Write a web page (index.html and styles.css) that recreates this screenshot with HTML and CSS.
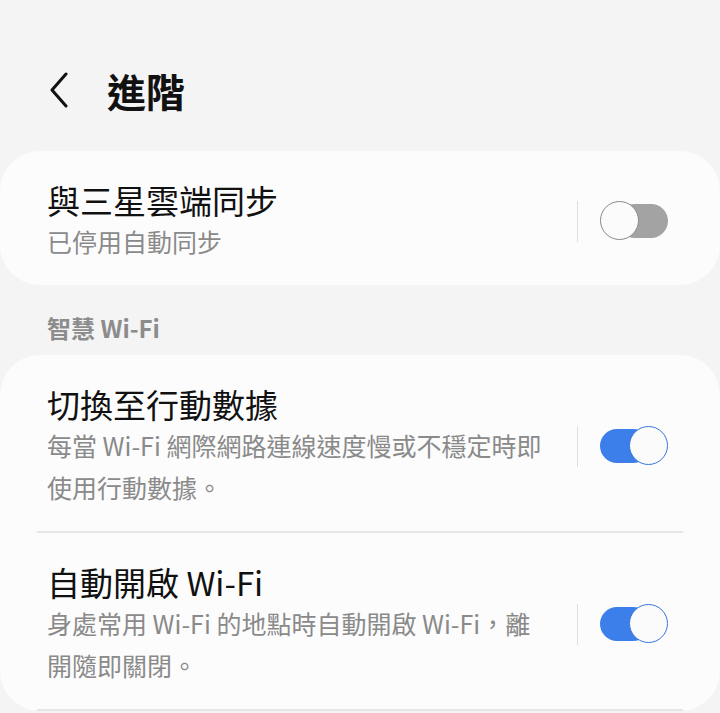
FILE: index.html
```html
<!DOCTYPE html>
<html>
    <head>
        <title>進階</title>
        <link rel="stylesheet" href="styles.css">
    </head>
    <body>
        <div class="header">
            <svg class="back" width="20" height="36" viewBox="0 0 20 36">
                <path d="M17 2 L3 18 L17 34" fill="none" stroke="#111" stroke-width="3" stroke-linecap="round" stroke-linejoin="round" />
            </svg>
            <h1 class="title">進階</h1>
        </div>

        <div class="card">
            <div class="item">
                <div class="text">
                    <div class="item-title">與三星雲端同步</div>
                    <div class="item-sub">已停用自動同步</div>
                </div>
                <div class="switch-wrap">
                    <div class="sep"></div>
                    <div class="toggle"><span class="track"></span><span class="knob"></span></div>
                </div>
            </div>
        </div>

        <div class="section">智慧 Wi-Fi</div>

        <div class="card">
            <div class="item">
                <div class="text">
                    <div class="item-title">切換至行動數據</div>
                    <div class="item-sub">每當 Wi-Fi 網際網路連線速度慢或不穩定時即使用行動數據。</div>
                </div>
                <div class="switch-wrap">
                    <div class="sep"></div>
                    <div class="toggle on"><span class="track"></span><span class="knob"></span></div>
                </div>
            </div>
            <div class="divider"></div>
            <div class="item">
                <div class="text">
                    <div class="item-title">自動開啟 Wi-Fi</div>
                    <div class="item-sub">身處常用 Wi-Fi 的地點時自動開啟 Wi-Fi，離開隨即關閉。</div>
                </div>
                <div class="switch-wrap">
                    <div class="sep"></div>
                    <div class="toggle on"><span class="track"></span><span class="knob"></span></div>
                </div>
            </div>
            <div class="divider"></div>
        </div>
    </body>
</html>
```

FILE: styles.css
```css
body {
    margin: 0;
    background: #f4f4f4;
    color: #111;
    font-family: 'Noto Sans CJK TC', 'Noto Sans', sans-serif;
    height: 713px;
    overflow: hidden;
}

.header {
    display: flex;
    align-items: center;
    height: 48px;
    padding: 66px 0 0 49px;
    margin-bottom: 37px;
}

.back {
    display: block;
}

.title {
    margin: 0 0 0 38px;
    font-size: 39px;
    font-weight: 700;
    line-height: 48px;
}

.card {
    background: #fcfcfc;
    border-radius: 40px;
}

.item {
    display: flex;
    align-items: center;
    padding: 29px 52px 23px 47px;
}

.text {
    flex: 1;
    margin-right: 30px;
}

.item-title {
    font-size: 33px;
    line-height: 40px;
}

.item-sub {
    font-size: 25px;
    line-height: 42px;
    color: #8a8a8a;
}

.switch-wrap {
    display: flex;
    align-items: center;
}

.sep {
    width: 1px;
    height: 41px;
    background: #dedede;
    margin-right: 22px;
}

.toggle {
    position: relative;
    width: 68px;
    height: 40px;
}

.track {
    position: absolute;
    top: 3px;
    right: 0;
    width: 50px;
    height: 34px;
    border-radius: 17px;
    background: #a3a3a3;
}

.knob {
    position: absolute;
    top: 0;
    left: 0;
    width: 37px;
    height: 37px;
    border: 1.5px solid #8a8a8a;
    border-radius: 50%;
    background: #fbfbfb;
}

.toggle.on .track {
    left: 0;
    right: auto;
    background: #3c7eea;
}

.toggle.on .knob {
    left: auto;
    right: 0;
    border-color: #3a78d9;
}

.divider {
    height: 2px;
    background: #e6e6e6;
    margin: 0 37px;
}

.section {
    padding: 28px 47px 12px;
    font-size: 24px;
    font-weight: 700;
    line-height: 30px;
    color: #8c8c8c;
}
```
